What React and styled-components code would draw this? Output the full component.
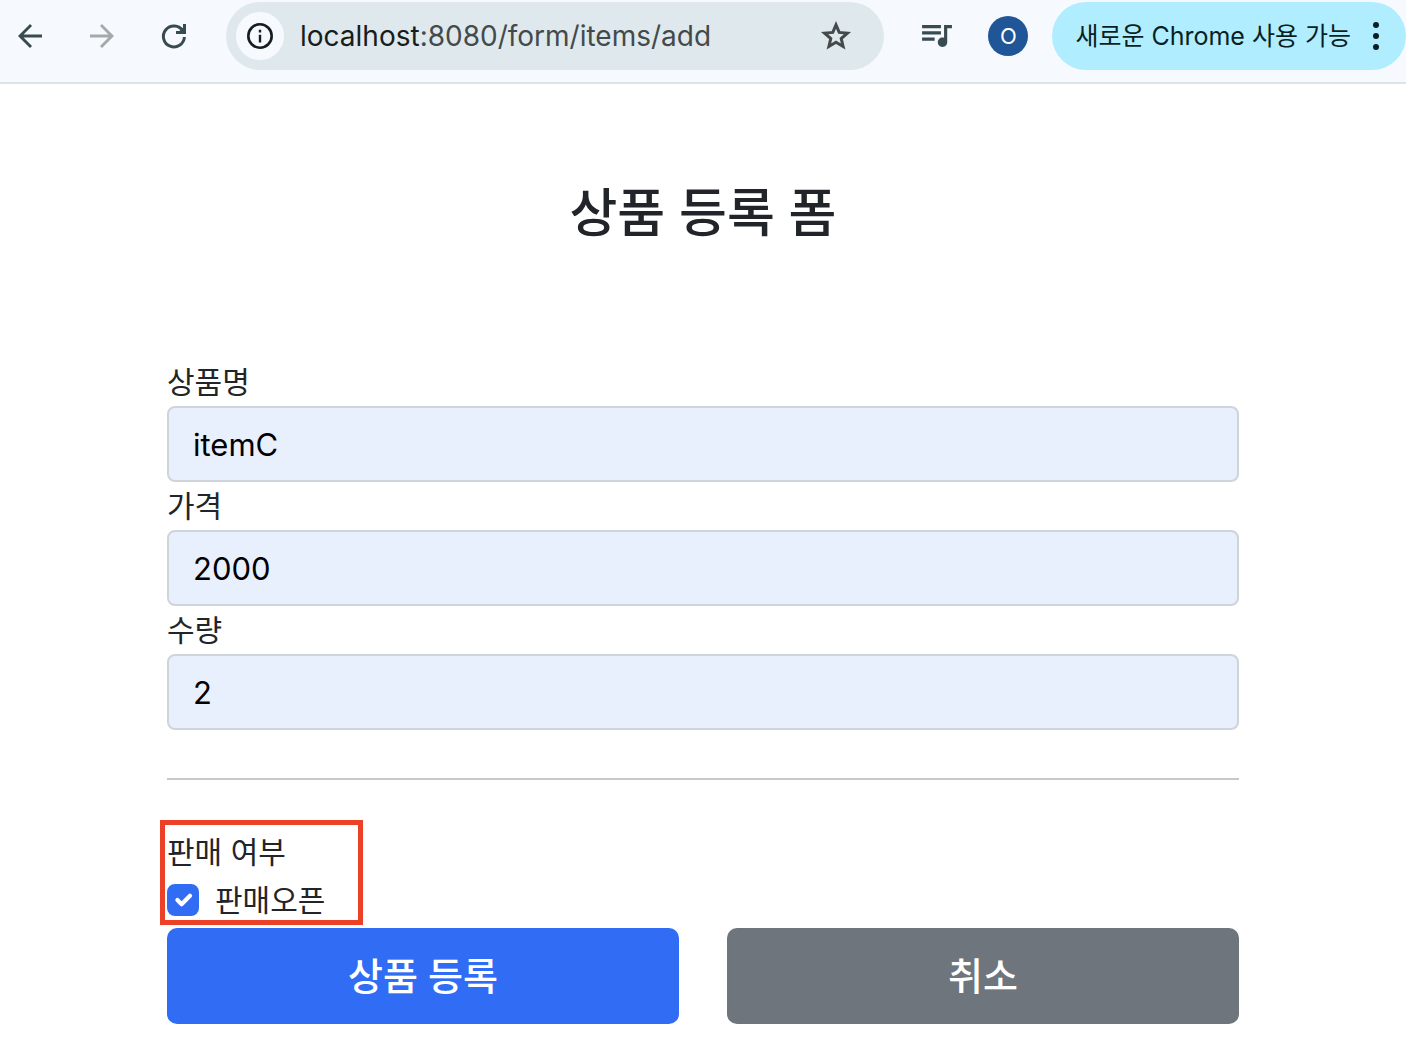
import React, { useState } from 'react'
import styled, { createGlobalStyle } from 'styled-components'

const colors = {
  white: '#ffffff',
  text: '#212529',
  toolbar: '#f6fafe',
  toolbarLine: '#dbe4e6',
  omnibox: '#dfe9ed',
  icon: '#384b50',
  iconMuted: '#a5a9aa',
  url: '#444a4b',
  urlHost: '#171d1e',
  avatar: '#205597',
  update: '#b0edfe',
  updateText: '#0a1f24',
  field: '#e8effd',
  fieldLine: '#ced4da',
  rule: '#c7c8c9',
  primary: '#316df4',
  secondary: '#6e757c',
  highlight: '#ec4126',
}

const fields = [
  { id: 'itemName', label: '상품명', value: 'itemC' },
  { id: 'price', label: '가격', value: '2000' },
  { id: 'quantity', label: '수량', value: '2' },
]

const Toolbar = () => {
  return (
    <ToolbarBar>
      <NavGroup>
        <IconButton type="button" aria-label="뒤로">
          <svg width="36" height="36" viewBox="0 0 24 24" fill="currentColor">
            <path d="M20 11H7.7l5.65-5.6L12 4l-8 8 8 8 1.35-1.4L7.7 13H20z" />
          </svg>
        </IconButton>
        <IconButton type="button" aria-label="앞으로" disabled>
          <svg width="36" height="36" viewBox="0 0 24 24" fill="currentColor">
            <path d="M4 11h12.3l-5.65-5.6L12 4l8 8-8 8-1.35-1.4 5.65-5.6H4z" />
          </svg>
        </IconButton>
        <IconButton type="button" aria-label="새로고침">
          <svg width="36" height="36" viewBox="0 0 36 36" fill="none" stroke="currentColor" strokeWidth="3">
            <path d="M26.8 12.8A10.5 10.5 0 1 0 28.4 19" />
            <path d="M28.5 6v8.5H20" />
            <path d="M23 13.5l4.5-4.5v4.5z" fill="currentColor" stroke="none" />
          </svg>
        </IconButton>
      </NavGroup>
      <Omnibox>
        <SiteInfo type="button" aria-label="사이트 정보">
          <svg width="26" height="26" viewBox="0 0 26 26" fill="none" stroke="currentColor">
            <circle cx="13" cy="13" r="11.7" strokeWidth="2.6" />
            <path d="M13 11.8v7.7M13 6.8v2.8" strokeWidth="2.4" />
          </svg>
        </SiteInfo>
        <Url>
          <b>localhost</b>:8080/form/items/add
        </Url>
        <StarButton type="button" aria-label="북마크">
          <svg width="36" height="36" viewBox="0 0 36 36" fill="none" stroke="currentColor" strokeWidth="3">
            <path d="M18 6.8l3.2 7.6 8.2.7-6.2 5.4 1.9 8-7.1-4.2-7.1 4.2 1.9-8-6.2-5.4 8.2-.7z" />
          </svg>
        </StarButton>
      </Omnibox>
      <MediaButton type="button" aria-label="미디어">
        <svg width="30" height="22" viewBox="3 6 19 14" fill="currentColor">
          <path d="M15 6H3v2h12V6zm0 4H3v2h12v-2zM3 16h8v-2H3v2zM17 6v8.18c-.31-.11-.65-.18-1-.18-1.66 0-3 1.34-3 3s1.34 3 3 3 3-1.34 3-3V8h3V6h-5z" />
        </svg>
      </MediaButton>
      <Avatar type="button">O</Avatar>
      <UpdateButton type="button">
        새로운 Chrome 사용 가능
        <svg width="6" height="28" viewBox="0 0 6 28" fill="currentColor">
          <circle cx="3" cy="3" r="3" />
          <circle cx="3" cy="14" r="3" />
          <circle cx="3" cy="25" r="3" />
        </svg>
      </UpdateButton>
    </ToolbarBar>
  )
}

const App = () => {
  const [values, setValues] = useState(Object.fromEntries(fields.map((f) => [f.id, f.value])))
  const [open, setOpen] = useState(true)

  return (
    <>
      <GlobalStyle />
      <Toolbar />
      <Container>
        <Title>상품 등록 폼</Title>
        <form onSubmit={(e) => e.preventDefault()}>
          {fields.map((f) => (
            <Field key={f.id}>
              <Label htmlFor={f.id}>{f.label}</Label>
              <Input
                id={f.id}
                type="text"
                value={values[f.id]}
                onChange={(e) => setValues({ ...values, [f.id]: e.target.value })}
              />
            </Field>
          ))}
          <Rule />
          <OpenGroup>
            <div>판매 여부</div>
            <CheckRow>
              <Checkbox>
                <input id="open" type="checkbox" checked={open} onChange={(e) => setOpen(e.target.checked)} />
                <svg viewBox="0 0 20 20" fill="none" stroke="#fff" strokeWidth="3" strokeLinecap="round" strokeLinejoin="round">
                  <path d="M6 10l3 3 6-6" />
                </svg>
              </Checkbox>
              <Label htmlFor="open">판매오픈</Label>
            </CheckRow>
          </OpenGroup>
          <Actions>
            <Button type="submit">상품 등록</Button>
            <Button type="button" $secondary>취소</Button>
          </Actions>
        </form>
      </Container>
    </>
  )
}

const GlobalStyle = createGlobalStyle`
  *, *::before, *::after {
    box-sizing: border-box;
  }
  body {
    margin: 0;
    background: ${colors.white};
    color: ${colors.text};
    font-family: Inter, "Noto Sans CJK KR", sans-serif;
    font-size: 30px;
    line-height: 48px;
  }
  button, input {
    font: inherit;
  }
  svg {
    display: block;
    flex: none;
  }
`

const ToolbarBar = styled.header`
  display: flex;
  align-items: center;
  padding: 2px 0 12px 12px;
  background: ${colors.toolbar};
  border-bottom: 2px solid ${colors.toolbarLine};
`

const NavGroup = styled.nav`
  display: flex;
  gap: 36px;
  margin-right: 34px;
`

const IconButton = styled.button`
  padding: 0;
  border: 0;
  background: none;
  color: ${colors.icon};
  &:disabled {
    color: ${colors.iconMuted};
  }
`

const Omnibox = styled.div`
  display: flex;
  flex: 1;
  align-items: center;
  height: 68px;
  padding: 0 30px 0 10px;
  border-radius: 34px;
  background: ${colors.omnibox};
`

const SiteInfo = styled(IconButton)`
  display: flex;
  align-items: center;
  justify-content: center;
  width: 48px;
  height: 48px;
  border-radius: 50%;
  background: ${colors.toolbar};
  color: ${colors.urlHost};
`

const Url = styled.div`
  flex: 1;
  padding-left: 16px;
  color: ${colors.url};
  font-size: 28px;
  white-space: nowrap;
  b {
    color: ${colors.urlHost};
    font-weight: 400;
  }
`

const StarButton = styled(IconButton)`
  color: ${colors.url};
`

const MediaButton = styled(IconButton)`
  margin: 0 36px 0 38px;
`

const Avatar = styled.button`
  width: 40px;
  height: 40px;
  margin-right: 24px;
  padding: 0;
  border: 0;
  border-radius: 50%;
  background: ${colors.avatar};
  color: ${colors.white};
  font-size: 22px;
  line-height: 40px;
`

const UpdateButton = styled.button`
  display: flex;
  align-items: center;
  gap: 22px;
  height: 68px;
  padding: 0 27px 0 23px;
  border: 0;
  border-radius: 34px;
  background: ${colors.update};
  color: ${colors.updateText};
  font-size: 25px;
  white-space: nowrap;
`

const Container = styled.main`
  max-width: 1120px;
  margin: 0 auto;
  padding: 0 24px;
`

const Title = styled.h2`
  margin: 0 0 14px;
  padding: 96px 0;
  font-size: 52px;
  font-weight: 500;
  line-height: 68px;
  text-align: center;
`

const Field = styled.div`
  display: flex;
  flex-direction: column;
`

const Label = styled.label`
  display: block;
`

const Input = styled.input`
  width: 100%;
  height: 76px;
  padding: 12px 24px;
  border: 2px solid ${colors.fieldLine};
  border-radius: 8px;
  background: ${colors.field};
  color: #000;
  font-size: 31px;
`

const Rule = styled.hr`
  height: 2px;
  margin: 48px 0;
  border: 0;
  background: ${colors.rule};
`

const OpenGroup = styled.div`
  position: relative;
  width: fit-content;
  margin-bottom: 4px;
  padding-right: 32px;
  &::after {
    content: "";
    position: absolute;
    inset: -8px -6px -1px -7px;
    border: 5px solid ${colors.highlight};
    pointer-events: none;
  }
`

const CheckRow = styled.div`
  display: flex;
  align-items: center;
  gap: 16px;
`

const Checkbox = styled.span`
  position: relative;
  width: 32px;
  height: 32px;
  input {
    display: block;
    appearance: none;
    width: 32px;
    height: 32px;
    margin: 0;
    border: 2px solid ${colors.fieldLine};
    border-radius: 8px;
    background: ${colors.white};
  }
  input:checked {
    border-color: ${colors.primary};
    background: ${colors.primary};
  }
  svg {
    position: absolute;
    inset: 2px;
    pointer-events: none;
  }
`

const Actions = styled.div`
  display: grid;
  grid-template-columns: 1fr 1fr;
  gap: 48px;
`

const Button = styled.button`
  height: 96px;
  border: 0;
  border-radius: 10px;
  background: ${(props) => (props.$secondary ? colors.secondary : colors.primary)};
  color: ${colors.white};
  font-size: 38px;
  font-weight: 500;
`

export default App
